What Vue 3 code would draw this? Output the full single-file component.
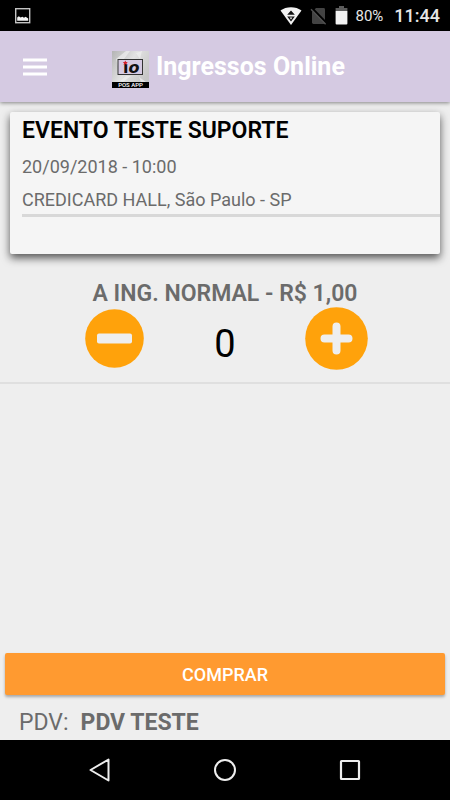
<template>
  <div class="screen">
    <!-- System status bar -->
    <div class="status-bar">
      <svg class="status-picture" width="16" height="16" viewBox="0 0 16 16" aria-hidden="true">
        <rect x="0.7" y="0.7" width="14" height="14" fill="none" stroke="#c4c4c4" stroke-width="1.4" />
        <path d="M2.2 12.8V9.4l1.6-1.2 1.8 1.4 1.8-.8 1.6 1 1.6-1 2.6 1.6v2.4z" fill="#f4f4f4" />
      </svg>
      <div class="status-icons">
        <svg width="22" height="20" viewBox="0 0 22 20" aria-hidden="true">
          <path d="M0.5 4.6C6 0 16 0 21.5 4.6L11 19z" fill="#f2f2f2" />
          <path d="M11 4.4l3.8 4.4H7.2zM7.2 10.6h7.6L11 15.4z" fill="#111" />
          <path d="M9.6 11.6h2.8L11 13.6z" fill="#f2f2f2" />
        </svg>
        <svg width="17" height="18" viewBox="0 0 17 18" aria-hidden="true">
          <path d="M6 1h7.6q1.4 0 1.4 1.4V17H3.4Q2 17 2 15.6V5z" fill="#434343" />
          <path d="M1.5 0.5l15 15.5" stroke="#000" stroke-width="2" />
          <path d="M1 2.2l14.6 15" stroke="#505050" stroke-width="1.4" />
        </svg>
        <svg width="13" height="19" viewBox="0 0 13 19" aria-hidden="true">
          <path d="M4 0h5v2h3.4v3H0.6V2H4z" fill="#5c5c5c" />
          <path d="M0.6 5h11.8v12.4q0 1-1 1H1.6q-1 0-1-1z" fill="#f2f2f2" />
        </svg>
      </div>
      <span class="battery">80%</span>
      <span class="clock">11:44</span>
    </div>

    <!-- App bar -->
    <header class="app-bar">
      <button class="menu" type="button" aria-label="Menu">
        <svg width="24" height="18" viewBox="0 0 24 18" aria-hidden="true">
          <path d="M0 2h24M0 9h24M0 16h24" stroke="#fff" stroke-width="2.8" />
        </svg>
      </button>
      <svg class="logo" width="37" height="37" viewBox="0 0 37 37" aria-hidden="true">
        <defs>
          <linearGradient id="logo-back" x1="0" y1="0" x2="1" y2="0.6">
            <stop offset="0" stop-color="#b4b4b4" />
            <stop offset="0.5" stop-color="#e2e2e2" />
            <stop offset="1" stop-color="#c6c6c6" />
          </linearGradient>
        </defs>
        <rect width="37" height="37" fill="url(#logo-back)" />
        <path d="M4 8L14 0h4L6 16zM24 2l6-2-2 8zM8 30l6-5h5l-8 6zM27 26l7 5h-5z" fill="#f0f0f0" opacity="0.7" />
        <rect x="6" y="8.5" width="24.5" height="15" fill="#d5cae2" stroke="#333" stroke-width="1" />
        <text x="11" y="22.4" class="logo-name">ı<tspan class="logo-slant">o</tspan></text>
        <path d="M13.3 9.4l.8 1.5 1.7.2-1.2 1.2.3 1.6-1.6-.8-1.6.8.3-1.6-1.2-1.2 1.7-.2z" fill="#d4202c" />
        <rect y="31" width="37" height="6" fill="#000" />
        <text x="18.5" y="36" text-anchor="middle" class="logo-text">POS APP</text>
      </svg>
      <h1 class="app-title">Ingressos Online</h1>
    </header>

    <main class="content">
      <!-- Event details -->
      <section class="event-card">
        <h2 class="event-name">{{ event.name }}</h2>
        <p class="event-line">{{ event.date }}</p>
        <p class="event-line">{{ event.place }}</p>
        <hr class="event-rule" />
      </section>

      <!-- Ticket quantity -->
      <section class="ticket">
        <h3 class="ticket-name">A ING. NORMAL - R$ 1,00</h3>
        <div class="stepper">
          <button class="step" type="button" aria-label="Diminuir" @click="decrease">
            <svg width="59" height="59" viewBox="0 0 59 59" aria-hidden="true">
              <circle cx="29.5" cy="29.5" r="29.3" fill="#ffa20b" />
              <rect x="12" y="24.5" width="35" height="10" rx="2" fill="#eee" />
            </svg>
          </button>
          <output class="quantity">{{ quantity }}</output>
          <button class="step" type="button" aria-label="Aumentar" @click="increase">
            <svg width="63" height="63" viewBox="0 0 63 63" aria-hidden="true">
              <circle cx="31.5" cy="31.5" r="31.3" fill="#ffa20b" />
              <path d="M19.5 31.5h24M31.5 19.5v24" stroke="#eee" stroke-width="8" stroke-linecap="round" />
            </svg>
          </button>
        </div>
      </section>
    </main>

    <footer class="bottom">
      <button class="buy" type="button">COMPRAR</button>
      <p class="pdv"><span>PDV:</span><strong>PDV TESTE</strong></p>
    </footer>

    <!-- System navigation -->
    <nav class="nav-bar">
      <button class="nav-button" type="button" aria-label="Voltar">
        <svg width="24" height="24" viewBox="0 0 24 24" aria-hidden="true">
          <path d="M20.5 1.5v21L2.5 12z" fill="none" stroke="#eee" stroke-width="2" stroke-linejoin="round" />
        </svg>
      </button>
      <button class="nav-button" type="button" aria-label="Início">
        <svg width="24" height="24" viewBox="0 0 24 24" aria-hidden="true">
          <circle cx="12" cy="12" r="10" fill="none" stroke="#eee" stroke-width="2" />
        </svg>
      </button>
      <button class="nav-button" type="button" aria-label="Recentes">
        <svg width="24" height="24" viewBox="0 0 24 24" aria-hidden="true">
          <rect x="3" y="3" width="18" height="18" rx="0.5" fill="none" stroke="#eee" stroke-width="2.2" />
        </svg>
      </button>
    </nav>
  </div>
</template>

<script setup>
import { ref } from 'vue'

const event = {
  name: 'EVENTO TESTE SUPORTE',
  date: '20/09/2018 - 10:00',
  place: 'CREDICARD HALL, São Paulo - SP',
}

// Number of tickets selected
const quantity = ref(0)

const increase = () => {
  quantity.value++
}

// Never goes below zero
const decrease = () => {
  if (quantity.value > 0) quantity.value--
}
</script>

<style>
body {
  margin: 0;
  background: #eee;
}
</style>

<style scoped>
.screen {
  display: flex;
  flex-direction: column;
  min-height: 100vh;
  background: #eee;
  font-family: Roboto, "Liberation Sans", sans-serif;
  color: #6b6b6b;
}

h1,
h2,
h3,
p {
  margin: 0;
}

button {
  padding: 0;
  border: 0;
  background: none;
  font-family: inherit;
  cursor: pointer;
}

svg {
  display: block;
}

.status-bar {
  display: flex;
  align-items: center;
  height: 31px;
  padding: 0 10px 0 15px;
  background: #000;
  color: #e6e6e6;
}

.status-picture {
  margin-right: auto;
}

.status-icons {
  display: flex;
  align-items: center;
  gap: 8px;
}

.battery {
  margin-left: 7px;
  font-size: 15px;
}

.clock {
  margin-left: 11px;
  font-size: 18px;
  font-weight: 500;
}

.app-bar {
  display: flex;
  align-items: center;
  height: 71px;
  padding: 0 23px;
  background: #d5cae2;
  box-shadow: 0 1px 4px rgba(0, 0, 0, 0.45);
}

.logo {
  margin: 5px 7px 0 65px;
}

.logo-name {
  fill: #111;
  font-family: "DejaVu Sans", sans-serif;
  font-size: 16px;
  font-weight: 700;
}

.logo-slant {
  font-style: italic;
}

.logo-text {
  fill: #fff;
  font-size: 6px;
  font-weight: 500;
}

.app-title {
  color: #fff;
  font-size: 25px;
  font-weight: 700;
  line-height: 32px;
  white-space: nowrap;
}

.content {
  flex: 1;
}

.event-card {
  margin: 10px 10px 0;
  padding: 4px 0 37px 12px;
  border-radius: 2px;
  background: #f5f5f5;
  box-shadow: 0 4px 8px rgba(0, 0, 0, 0.65);
}

.event-name {
  padding-bottom: 2px;
  color: #000;
  font-size: 23px;
  font-weight: 600;
  line-height: 30px;
}

.event-line {
  padding-top: 5px;
  font-size: 18px;
  line-height: 28px;
}

.event-rule {
  height: 3px;
  margin: 0;
  border: 0;
  background: #d8d8d8;
}

.ticket {
  padding: 26px 0 12px;
  border-bottom: 2px solid #dfdfdf;
}

.ticket-name {
  font-size: 23px;
  font-weight: 600;
  line-height: 27px;
  text-align: center;
}

.stepper {
  display: grid;
  grid-template-columns: repeat(3, 111px);
  justify-content: center;
  align-items: center;
  justify-items: center;
}

.quantity {
  padding-top: 10px;
  color: #000;
  font-size: 38px;
  line-height: 44px;
}

.bottom {
  padding: 0 5px;
}

.buy {
  display: block;
  width: 100%;
  height: 42px;
  border-radius: 2px;
  background: #ff9a30;
  box-shadow: 0 2px 3px rgba(0, 0, 0, 0.3);
  color: #fff;
  font-size: 18px;
  font-weight: 500;
}

.pdv {
  display: flex;
  gap: 12px;
  padding: 13px 14px 2px;
  font-size: 23px;
  line-height: 30px;
}

.nav-bar {
  display: flex;
  justify-content: center;
  align-items: center;
  gap: 101px;
  height: 60px;
  background: #000;
}
</style>
